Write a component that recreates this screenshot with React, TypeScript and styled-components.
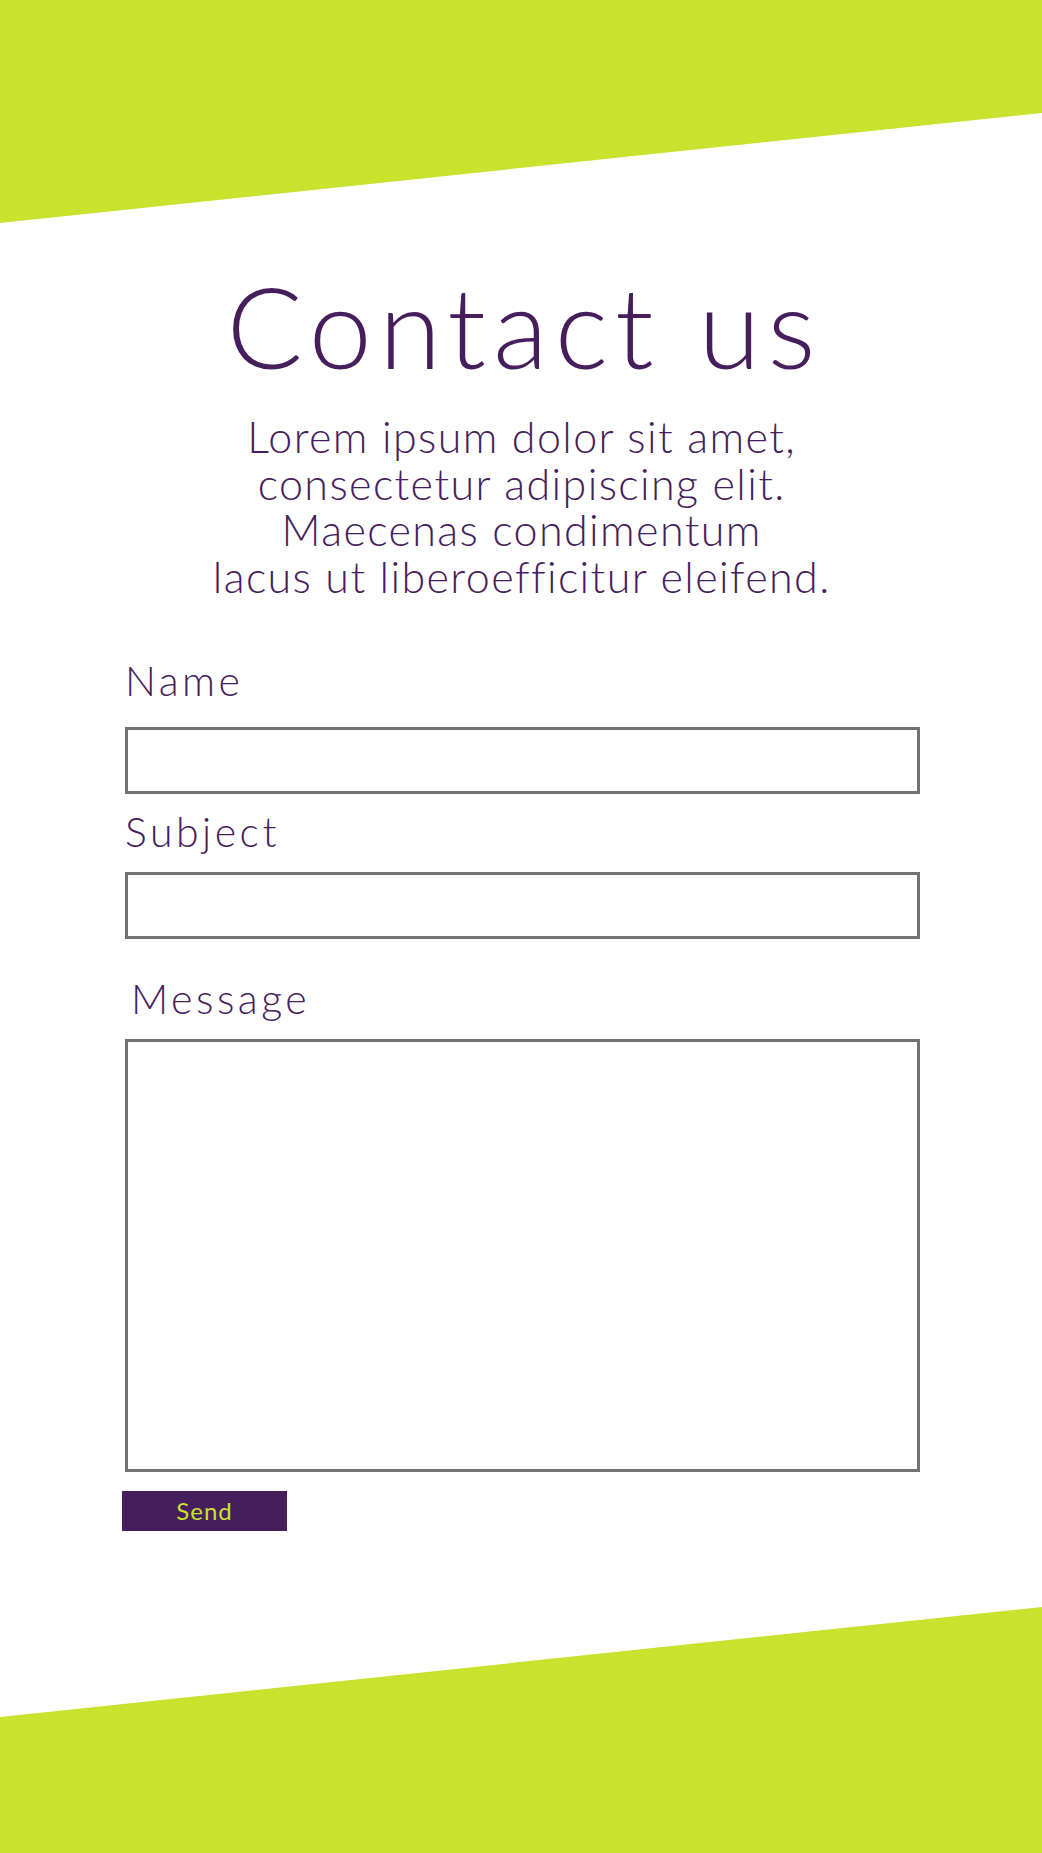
import React from "react";
import styled, { createGlobalStyle } from "styled-components";

const GlobalStyle = createGlobalStyle`
  html, body {
    margin: 0;
    padding: 0;
    background: #ffffff;
  }
  * { box-sizing: border-box; }
`;

const LIME = "#c8e22e";
const PURPLE = "#461e5c";
const GRAY = "#737373";

const Page = styled.div`
  min-height: 1853px;
  display: flex;
  flex-direction: column;
  background: #ffffff;
  font-family: "Lato", "Noto Sans", sans-serif;
  color: ${PURPLE};
`;

const TopBand = styled.div`
  height: 223px;
  background: ${LIME};
  clip-path: polygon(0 0, 100% 0, 100% 113px, 0 100%);
`;

const BottomBand = styled.div`
  margin-top: auto;
  height: 246px;
  background: ${LIME};
  clip-path: polygon(0 110px, 100% 0, 100% 100%, 0 100%);
`;

const Hero = styled.header`
  display: flex;
  flex-direction: column;
  align-items: center;
  text-align: center;
  margin-top: 46px;
`;

const Title = styled.h1`
  margin: 0;
  padding-left: 7px;
  font-size: 113px;
  line-height: 113px;
  font-weight: 300;
  letter-spacing: 7px;
`;

const Lead = styled.p`
  margin: 32px 0 0;
  padding-left: 1.4px;
  font-size: 43px;
  line-height: 46.67px;
  font-weight: 300;
  letter-spacing: 1.4px;
`;

const Form = styled.form`
  display: flex;
  flex-direction: column;
  padding: 0 122px 0 125px;
  margin-top: 60px;
`;

const Label = styled.label<{ $indent?: number; $gap?: number }>`
  display: block;
  margin: ${(p) => p.$gap ?? 0}px 0 0 ${(p) => p.$indent ?? 0}px;
  font-size: 41px;
  line-height: 40px;
  font-weight: 300;
  letter-spacing: 3.5px;
`;

const TextInput = styled.input<{ $gap?: number }>`
  display: block;
  width: 100%;
  height: 67px;
  margin-top: ${(p) => p.$gap ?? 26}px;
  border: 3px solid ${GRAY};
  border-radius: 0;
  background: #ffffff;
  outline: none;
  padding: 0 12px;
  font: inherit;
  font-size: 24px;
`;

const MessageArea = styled.textarea`
  display: block;
  width: 100%;
  height: 433px;
  margin-top: 20px;
  border: 3px solid ${GRAY};
  border-radius: 0;
  background: #ffffff;
  outline: none;
  resize: none;
  padding: 12px;
  font: inherit;
  font-size: 24px;
`;

const SendButton = styled.button`
  align-self: flex-start;
  width: 165px;
  height: 40px;
  margin: 19px 0 0 -3px;
  border: none;
  border-radius: 0;
  background: ${PURPLE};
  color: ${LIME};
  font-family: "Lato", "Noto Sans", sans-serif;
  font-weight: 400;
  font-size: 24px;
  letter-spacing: 1px;
  padding: 0;
  cursor: pointer;
`;

export default function App() {
  return (
    <>
      <GlobalStyle />
      <Page>
        <TopBand />
        <Hero>
          <Title>Contact us</Title>
          <Lead>
            Lorem ipsum dolor sit amet,
            <br />
            consectetur adipiscing elit.
            <br />
            Maecenas condimentum
            <br />
            lacus ut liberoefficitur eleifend.
          </Lead>
        </Hero>
        <Form onSubmit={(e) => e.preventDefault()}>
          <Label htmlFor="name">Name</Label>
          <TextInput id="name" type="text" />
          <Label htmlFor="subject" $gap={18}>Subject</Label>
          <TextInput id="subject" type="text" $gap={20} />
          <Label htmlFor="message" $gap={40} $indent={6}>Message</Label>
          <MessageArea id="message" />
          <SendButton type="submit">Send</SendButton>
        </Form>
        <BottomBand />
      </Page>
    </>
  );
}
